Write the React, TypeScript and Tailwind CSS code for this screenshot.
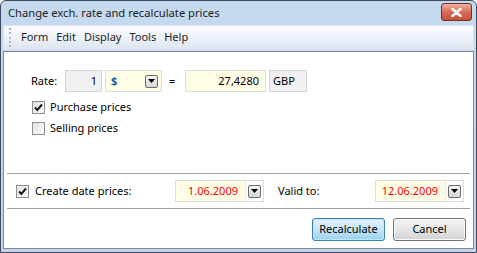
import React from 'react';

const font = { fontFamily: '"Noto Sans", "Open Sans", sans-serif' };

const DropBtn = () => (
  <span className="flex h-[13px] w-[13px] items-center justify-center rounded-[2px] border border-[#6b6b6b] bg-gradient-to-b from-[#f4f4f4] to-[#d6d6d6]">
    <svg width="7" height="4" viewBox="0 0 7 4">
      <path d="M0 0h7L3.5 4z" fill="#000" />
    </svg>
  </span>
);

const Check = ({ checked }: { checked?: boolean }) => (
  <span className="flex h-[13px] w-[13px] items-center justify-center border border-[#8e8f8f] bg-gradient-to-br from-[#e2e2e2] to-[#fbfbfb]">
    {checked && (
      <svg width="9" height="9" viewBox="0 0 9 9">
        <path d="M1 4.5l2.3 2.5L8 1.5" stroke="#1a1a1a" strokeWidth="2" fill="none" />
      </svg>
    )}
  </span>
);

const DateBox = ({ value }: { value: string }) => (
  <div className="flex h-[22px] w-[89px] items-center border border-[#dcdcdc] bg-[#fffde6]">
    <span className="flex-1 pr-[7px] text-right text-[#ff0000]">{value}</span>
    <span className="flex h-full items-center border-l border-[#ebebeb] bg-white px-[2px]">
      <DropBtn />
    </span>
  </div>
);

export default function App() {
  return (
    <div
      className="h-[253px] w-[477px] overflow-hidden rounded-t-[6px] border border-[#3f4a5a] bg-gradient-to-b from-[#c5d9ef] to-[#c0d5ed] text-[11px] text-[#000]"
      style={font}
    >
      {/* Title bar */}
      <div className="flex h-[24px] items-center justify-between pl-[7px] pr-[4px]">
        <span className="text-[11.2px] text-[#1e1e1e]">Change exch. rate and recalculate prices</span>
        <button className="mb-[2px] flex h-[18px] w-[31px] items-center justify-center rounded-[3px] border border-[#6e3127] bg-gradient-to-b from-[#eeb2a6] via-[#d86b57] to-[#c6503a]">
          <svg width="11" height="9" viewBox="0 0 11 9">
            <path d="M1.5 1l8 7M9.5 1l-8 7" stroke="#fff" strokeWidth="2.6" strokeLinecap="round" />
            <path d="M1.5 1l8 7M9.5 1l-8 7" stroke="#f4f4f4" strokeWidth="1.6" strokeLinecap="round" />
          </svg>
        </button>
      </div>

      {/* Menu bar */}
      <div className="mx-[2px] flex h-[25px] items-center border border-[#dce6f2] bg-gradient-to-b from-[#fbfcfe] via-[#eef2f9] to-[#dde5f1]">
        <div className="ml-[5px] mr-[6px] flex h-[19px] flex-col justify-between">
          {[0, 1, 2, 3, 4].map((i) => (
            <span key={i} className="block h-[2px] w-[2px] bg-[#a7b6c9]" />
          ))}
        </div>
        {['Form', 'Edit', 'Display', 'Tools', 'Help'].map((m) => (
          <span key={m} className="px-[4px] text-[#1e1e1e]">
            {m}
          </span>
        ))}
      </div>

      {/* Main panel */}
      <div className="mx-[2px] mt-[1px] flex h-[198px] flex-col border border-[#828790] bg-white">
        <div className="h-[121px] pl-[27px] pt-[18px]">
          <div className="flex h-[22px] items-center">
            <span className="w-[34px]">Rate:</span>
            <div className="flex h-[22px] w-[37px] items-center justify-end border border-[#d5d5d5] bg-[#f0f0f0] pr-[4px]">1</div>
            <div className="ml-[3px] flex h-[22px] w-[57px] items-center border border-[#dcdcdc] bg-[#fffde6] pl-[5px]">
              <span className="flex-1 font-bold text-[#1c5ea6]">$</span>
              <span className="mr-[3px]">
                <DropBtn />
              </span>
            </div>
            <span className="ml-[7px] w-[8px]">=</span>
            <div className="ml-[8px] flex h-[22px] w-[81px] items-center justify-end border border-[#dcdcdc] bg-[#fffde6] pr-[6px]">
              27,4280
            </div>
            <div className="ml-[3px] flex h-[22px] w-[38px] items-center border border-[#d5d5d5] bg-[#f0f0f0] pl-[3px]">GBP</div>
          </div>
          <div className="mt-[7px] flex h-[16px] items-center">
            <span className="ml-[1px] mr-[5px]">
              <Check checked />
            </span>
            Purchase prices
          </div>
          <div className="mt-[5px] flex h-[16px] items-center">
            <span className="ml-[1px] mr-[5px]">
              <Check />
            </span>
            Selling prices
          </div>
        </div>

        <div className="mx-[3px] border-t border-[#a0a0a0]" />

        <div className="flex h-[34px] items-center pl-[12px]">
          <span className="mr-[6px]">
            <Check checked />
          </span>
          <span className="w-[140px]">Create date prices:</span>
          <DateBox value="1.06.2009" />
          <span className="ml-[14px] w-[97px]">Valid to:</span>
          <DateBox value="12.06.2009" />
        </div>

        <div className="mx-[3px] border-t border-[#a0a0a0]" />

        <div className="flex justify-end gap-[8px] pr-[7px] pt-[9px]">
          <button className="h-[23px] w-[73px] rounded-[3px] border border-[#3c7fb1] bg-gradient-to-b from-[#e5f4fc] via-[#c4e5f6] to-[#98d1ef] shadow-[inset_0_0_0_1px_#bfe6fb]">
            Recalculate
          </button>
          <button className="h-[23px] w-[73px] rounded-[3px] border border-[#707070] bg-gradient-to-b from-[#f2f2f2] via-[#e6e6e6] to-[#d2d2d2] shadow-[inset_0_0_0_1px_#fcfcfc]">
            Cancel
          </button>
        </div>
      </div>
    </div>
  );
}
